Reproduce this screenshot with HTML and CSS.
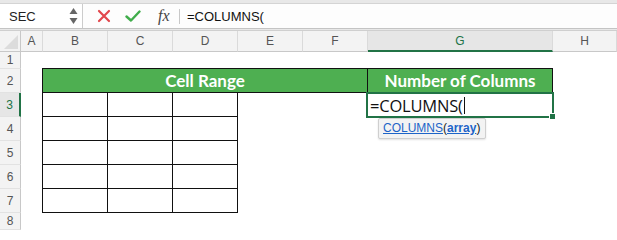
FILE: index.html
```html
<!DOCTYPE html>
<html>
<head>
<meta charset="utf-8">
<link rel="stylesheet" href="styles.css">
</head>
<body>
<div class="bar">
  <div class="bar-inner">
    <div class="namebox">
      <span class="name">SEC</span>
      <span class="spin">
        <svg width="9" height="18" viewBox="0 0 9 18"><path d="M4.5 1 L8.5 7 L0.5 7 Z" fill="#666"/><path d="M0.5 11 L8.5 11 L4.5 17 Z" fill="#666"/></svg>
      </span>
    </div>
    <div class="btns">
      <svg class="ico" width="14" height="14" viewBox="0 0 14 14"><path d="M2 2 L12 12 M12 2 L2 12" stroke="#e2474c" stroke-width="2.2" stroke-linecap="round"/></svg>
      <svg class="ico" width="16" height="14" viewBox="0 0 16 14"><path d="M1.5 7.5 L6 11.5 L14.5 2.5" stroke="#40ad4b" stroke-width="2.4" fill="none" stroke-linecap="round" stroke-linejoin="round"/></svg>
      <span class="fx">fx</span>
    </div>
    <div class="sep"></div>
    <div class="formula">=COLUMNS(</div>
  </div>
</div>
<div class="sheet">
  <div class="corner"><span class="tri"></span></div>
  <div class="ch">A</div>
  <div class="ch">B</div>
  <div class="ch">C</div>
  <div class="ch">D</div>
  <div class="ch">E</div>
  <div class="ch">F</div>
  <div class="ch ch-active">G</div>
  <div class="ch">H</div>

  <div class="rh r1">1</div>
  <div class="rh r2">2</div>
  <div class="rh r3 rh-active">3</div>
  <div class="rh r4">4</div>
  <div class="rh r5">5</div>
  <div class="rh r6">6</div>
  <div class="rh r7">7</div>
  <div class="rh r8">8</div>

  <div class="head">
    <div class="hcell hcell-wide">Cell Range</div>
    <div class="hcell hcell-last">Number of Columns</div>
  </div>

  <div class="tbl">
    <div class="tc"></div><div class="tc"></div><div class="tc"></div>
    <div class="tc"></div><div class="tc"></div><div class="tc"></div>
    <div class="tc"></div><div class="tc"></div><div class="tc"></div>
    <div class="tc"></div><div class="tc"></div><div class="tc"></div>
    <div class="tc"></div><div class="tc"></div><div class="tc"></div>
  </div>

  <div class="active">
    <span class="entry">=COLUMNS(</span><span class="caret"></span>
    <span class="handle"></span>
    <div class="tip"><span class="lnk">COLUMNS</span>(<span class="lnk arg">array</span>)</div>
  </div>
</div>
</body>
</html>
```

FILE: styles.css
```css
html, body {
  margin: 0;
  padding: 0;
  background: #ffffff;
  width: 617px;
  height: 230px;
  overflow: hidden;
  font-family: "Liberation Sans", Arial, sans-serif;
}

.bar {
  height: 31px;
  background: #e8e8e8;
  padding-top: 3px;
  box-sizing: border-box;
  border-bottom: 1px solid #cfcfcf;
}

.bar-inner {
  height: 24px;
  background: #fdfdfd;
  border-top: 1px solid #d4d4d4;
  border-bottom: 1px solid #c4c4c4;
  display: flex;
  align-items: center;
}

.namebox {
  width: 83px;
  height: 100%;
  box-sizing: border-box;
  border-right: 1px solid #cccccc;
  background: #ffffff;
  display: flex;
  align-items: center;
  justify-content: space-between;
  padding: 0 4px 0 9px;
}

.name {
  font-size: 13px;
  color: #222;
}

.spin {
  display: flex;
}

.btns {
  display: flex;
  align-items: center;
  gap: 14px;
  padding-left: 14px;
  width: 82px;
}

.fx {
  font-family: "Liberation Serif", "Times New Roman", serif;
  font-style: italic;
  font-size: 16px;
  color: #444;
  margin-left: 3px;
}

.sep {
  width: 1px;
  height: 15px;
  background: #c8c8c8;
  margin-right: 7px;
}

.formula {
  font-size: 13px;
  color: #111;
}

.sheet {
  display: grid;
  grid-template-columns: 21px 22px 65px 65px 65px 65px 65px 185px 1fr;
  grid-template-rows: 21px 17px 24px 24px 24px 24px 24px 24px 1fr;
  height: 199px;
}

.corner {
  grid-column: 1;
  grid-row: 1;
  background: #f3f3f3;
  border-right: 1px solid #c8c8c8;
  border-bottom: 1px solid #c8c8c8;
  box-sizing: border-box;
  position: relative;
}

.tri {
  position: absolute;
  right: 2px;
  bottom: 2px;
  width: 0;
  height: 0;
  border-left: 14px solid transparent;
  border-bottom: 14px solid #dcdcdc;
}

.ch {
  grid-row: 1;
  background: #f3f3f3;
  border-right: 1px solid #dadada;
  border-bottom: 1px solid #c8c8c8;
  box-sizing: border-box;
  display: flex;
  align-items: center;
  justify-content: center;
  font-size: 12px;
  color: #555;
}

.ch-active {
  background: #e6e6e6;
  color: #217346;
  border-bottom: 2px solid #217346;
}

.rh {
  grid-column: 1;
  background: #f3f3f3;
  border-right: 1px solid #c8c8c8;
  border-bottom: 1px solid #e2e2e2;
  box-sizing: border-box;
  display: flex;
  align-items: center;
  justify-content: center;
  font-size: 12px;
  color: #555;
}

.rh-active {
  background: #e6e6e6;
  color: #217346;
  border-right: 2px solid #217346;
}

.r1 { grid-row: 2; }
.r2 { grid-row: 3; }
.r3 { grid-row: 4; }
.r4 { grid-row: 5; }
.r5 { grid-row: 6; }
.r6 { grid-row: 7; }
.r7 { grid-row: 8; }
.r8 { grid-row: 9; }

.head {
  grid-column: 3 / 9;
  grid-row: 3;
  display: flex;
  background: #4eaf51;
  border: 1.5px solid #111;
  margin-left: -1px;
  margin-top: -1px;
}

.hcell {
  display: flex;
  align-items: center;
  justify-content: center;
  color: #ffffff;
  font-family: Lato, "Open Sans", sans-serif;
  font-weight: bold;
  font-size: 17px;
}

.hcell-wide {
  flex: 1;
  border-right: 1.5px solid #111;
}

.hcell-last {
  width: 184px;
}

.tbl {
  grid-column: 3 / 6;
  grid-row: 4 / 9;
  display: grid;
  grid-template-columns: repeat(3, 1fr);
  grid-template-rows: repeat(5, 1fr);
  border-left: 1.5px solid #111;
  margin-left: -1px;
}

.tc {
  border-right: 1.5px solid #111;
  border-bottom: 1.5px solid #111;
}

.active {
  grid-column: 8;
  grid-row: 4;
  position: relative;
  border: 2px solid #217346;
  margin: -1px -1px -1px -2px;
  display: flex;
  align-items: center;
  padding-left: 2px;
  background: #fff;
}

.entry {
  font-family: "Open Sans", sans-serif;
  font-size: 16.5px;
  color: #111;
  letter-spacing: -0.2px;
}

.caret {
  width: 1px;
  height: 17px;
  background: #111;
  margin-left: 1px;
}

.handle {
  position: absolute;
  right: -4px;
  bottom: -4px;
  width: 5px;
  height: 5px;
  background: #217346;
  border: 1px solid #fff;
}

.tip {
  position: absolute;
  top: 24px;
  left: 10px;
  background: #f3f3f3;
  border: 1px solid #cfcfcf;
  border-radius: 2px;
  box-shadow: 0 1px 2px rgba(0,0,0,0.12);
  padding: 2px 5px 3px 4px;
  font-size: 12px;
  color: #222;
  white-space: nowrap;
}

.lnk {
  color: #1d64c8;
  text-decoration: underline;
}

.arg {
  font-weight: bold;
}
```
